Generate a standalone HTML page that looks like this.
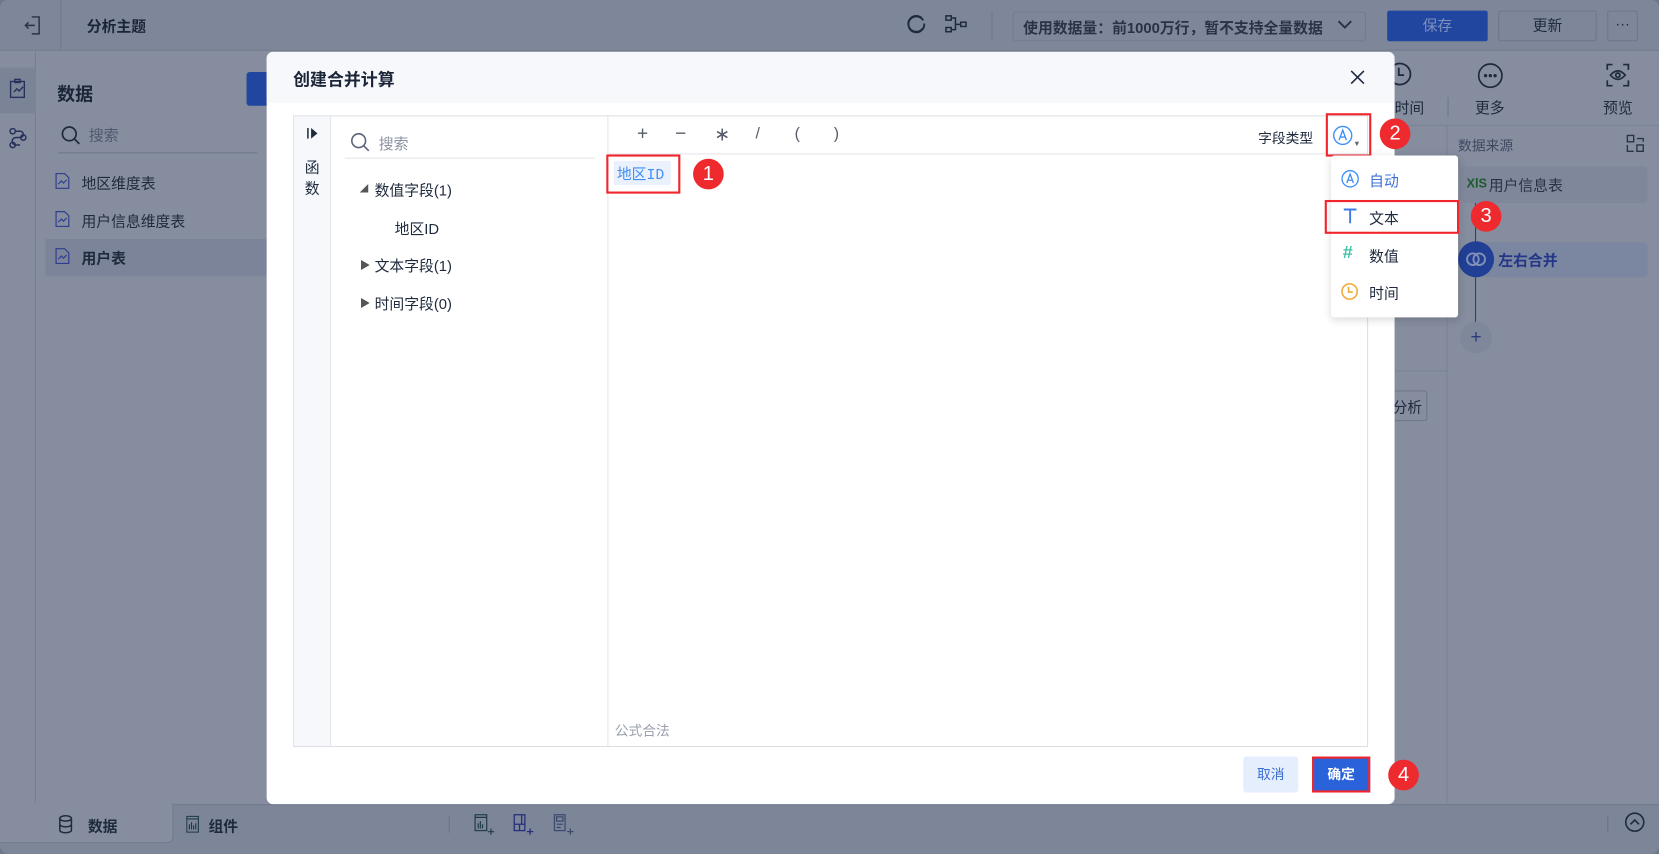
<!DOCTYPE html>
<html><head><meta charset="utf-8"><style>
*{box-sizing:border-box;margin:0;padding:0}
html,body{width:1659px;height:854px;overflow:hidden;background:#6f7789}
body{font-family:"Liberation Sans","Noto Sans CJK SC",sans-serif;font-size:14px;color:#1e2a3d}
#w{position:absolute;left:0;top:0;width:1568px;height:807px;transform:scale(1.0581);transform-origin:0 0;background:#858d9e;border-radius:8px;overflow:hidden}
.a{position:absolute}
.t{position:absolute;white-space:nowrap}
.badge{position:absolute;width:29px;height:29px;border-radius:50%;background:#ee2a2f;color:#fff;font-size:19px;text-align:center;line-height:29px}
.red{position:absolute;border:2px solid #f0262c}
</style></head><body><div id="w">
<!-- top bar -->
<div class="a" style="left:0;top:0;width:1568px;height:48px;background:#7e8799;border-bottom:1px solid #737c8e"></div>
<div class="a" style="left:57px;top:0;width:1px;height:48px;background:#727b8d"></div>
<svg class="a" style="left:22px;top:14px" width="18" height="20" viewBox="0 0 18 20" fill="none" stroke="#2a3347" stroke-width="1.4"><path d="M8 2h7v16H8M2 10h9M5 7l-3 3 3 3"/></svg>
<div class="t" style="left:82px;top:15px;font-weight:bold;font-size:14px;color:#1b2538">分析主题</div>
<svg class="a" style="left:856px;top:13px" width="20" height="20" viewBox="0 0 20 20" fill="none" stroke="#1e2a3d" stroke-width="1.8"><path d="M15 4a7.5 7.5 0 1 0 1 10M5 16"/><circle cx="10" cy="10" r="7.5" stroke-dasharray="20 3"/></svg>
<svg class="a" style="left:893px;top:14px" width="22" height="18" viewBox="0 0 22 18" fill="none" stroke="#1e2a3d" stroke-width="1.4"><rect x="1" y="1" width="5" height="4"/><rect x="1" y="12" width="5" height="4"/><rect x="15" y="7" width="5" height="4"/><path d="M6 3h4v11H6M10 9h5"/></svg>
<div class="a" style="left:937px;top:11px;width:1px;height:26px;background:#6e778a"></div>
<div class="a" style="left:957px;top:11px;width:334px;height:28px;border:1px solid #737c8f;border-radius:3px"></div>
<div class="t" style="left:967px;top:16px;font-size:14px;font-weight:bold;color:#2a3246">使用数据量：前1000万行，暂不支持全量数据</div>
<svg class="a" style="left:1264px;top:18px" width="14" height="10" viewBox="0 0 14 10" fill="none" stroke="#2a3246" stroke-width="1.8"><path d="M1 2l6 6 6-6"/></svg>
<div class="a" style="left:1311px;top:10px;width:95px;height:29px;background:#2146a0;border-radius:2px;color:#7f8fbc;text-align:center;line-height:29px;font-size:14px">保存</div>
<div class="a" style="left:1416px;top:10px;width:93px;height:29px;border:1px solid #6e778a;border-radius:2px;text-align:center;line-height:27px;font-size:14px;color:#1e2a3d">更新</div>
<div class="a" style="left:1519px;top:10px;width:29px;height:29px;border:1px solid #6e778a;border-radius:2px;text-align:center;line-height:22px;font-size:14px;color:#1e2a3d">···</div>
<!-- left rail -->
<div class="a" style="left:0;top:48px;width:34px;height:712px;background:#858d9e;border-right:1px solid #767f91"></div>
<div class="a" style="left:0;top:64px;width:34px;height:43px;background:#7b8497"></div>
<svg class="a" style="left:9px;top:74px" width="16" height="20" viewBox="0 0 16 20" fill="none" stroke="#26305a" stroke-width="1.3"><rect x="1" y="3" width="13" height="15"/><rect x="5" y="1" width="5" height="3"/><path d="M4 13l3-3 2 2 4-4"/></svg>
<svg class="a" style="left:8px;top:120px" width="18" height="22" viewBox="0 0 18 22" fill="none" stroke="#26305a" stroke-width="1.4"><circle cx="4" cy="4" r="2.5"/><circle cx="14" cy="10" r="2.5"/><circle cx="4" cy="17" r="2.5"/><path d="M7 4h4a3 3 0 0 1 0 6H7a3 3 0 0 0 0 7h4"/></svg>
<!-- left panel -->
<div class="t" style="left:54px;top:75px;font-size:17px;font-weight:bold;color:#1b2538">数据</div>
<div class="a" style="left:233px;top:68px;width:22px;height:32px;background:#2146a0;border-radius:3px 0 0 3px"></div>
<svg class="a" style="left:57px;top:118px" width="20" height="20" viewBox="0 0 20 20" fill="none" stroke="#1e2a3d" stroke-width="1.6"><circle cx="8.5" cy="8.5" r="6.5"/><path d="M13.5 13.5l4.5 4.5"/></svg>
<div class="t" style="left:84px;top:118px;color:#4e5870;font-size:14px">搜索</div>
<div class="a" style="left:55px;top:144px;width:188px;height:1px;background:#6e778a"></div>
<div class="a" style="left:43px;top:226px;width:215px;height:35px;background:#7b8498"></div>
<div class="t" style="left:77px;top:163px">地区维度表</div>
<div class="t" style="left:77px;top:199px">用户信息维度表</div>
<div class="t" style="left:77px;top:234px;font-weight:bold">用户表</div>
<svg class="a" style="left:52px;top:163px" width="14" height="16" viewBox="0 0 14 16" fill="none" stroke="#2e3d8f" stroke-width="1.1"><path d="M1 1h8l4 4v10H1z"/><path d="M3 11l3-3 2 2 3-3"/></svg>
<svg class="a" style="left:52px;top:199px" width="14" height="16" viewBox="0 0 14 16" fill="none" stroke="#2e3d8f" stroke-width="1.1"><path d="M1 1h8l4 4v10H1z"/><path d="M3 11l3-3 2 2 3-3"/></svg>
<svg class="a" style="left:52px;top:234px" width="14" height="16" viewBox="0 0 14 16" fill="none" stroke="#2e3d8f" stroke-width="1.1"><path d="M1 1h8l4 4v10H1z"/><path d="M3 11l3-3 2 2 3-3"/></svg>
<!-- right area -->
<svg class="a" style="left:1311px;top:58px" width="24" height="24" viewBox="0 0 24 24" fill="none" stroke="#1e2a3d" stroke-width="1.7"><circle cx="12" cy="12" r="10"/><path d="M11 6v7h5"/></svg>
<div class="t" style="left:1318px;top:92px">时间</div>
<div class="a" style="left:1368px;top:92px;width:1px;height:18px;background:#6e778a"></div>
<svg class="a" style="left:1396px;top:59px" width="25" height="25" viewBox="0 0 25 25" fill="none" stroke="#1e2a3d" stroke-width="1.6"><circle cx="12.5" cy="12.5" r="11"/><circle cx="8" cy="12.5" r=".8" fill="#1e2a3d"/><circle cx="12.5" cy="12.5" r=".8" fill="#1e2a3d"/><circle cx="17" cy="12.5" r=".8" fill="#1e2a3d"/></svg>
<div class="t" style="left:1394px;top:92px">更多</div>
<svg class="a" style="left:1518px;top:60px" width="22" height="22" viewBox="0 0 22 22" fill="none" stroke="#1e2a3d" stroke-width="1.6"><path d="M1 6V1h5M16 1h5v5M21 16v5h-5M6 21H1v-5"/><path d="M4 11q7-8 14 0q-7 8-14 0z"/><circle cx="11" cy="11" r="2"/></svg>
<div class="t" style="left:1515px;top:92px">预览</div>
<div class="a" style="left:1318px;top:118px;width:250px;height:1px;background:#7a8395"></div>
<div class="a" style="left:1367px;top:119px;width:1px;height:641px;background:#7a8395"></div>
<div class="a" style="left:1318px;top:350px;width:50px;height:1px;background:#7a8395"></div>
<div class="t" style="left:1378px;top:127px;color:#3f4960;font-size:13px">数据来源</div>
<svg class="a" style="left:1537px;top:127px" width="17" height="17" viewBox="0 0 17 17" fill="none" stroke="#2a3347" stroke-width="1.3"><rect x="1" y="1" width="6" height="6"/><rect x="10" y="10" width="6" height="6"/><path d="M1 10v6h6M10 4h6v3"/></svg>
<div class="a" style="left:1380px;top:157px;width:177px;height:35px;background:#7f889b;border-radius:4px"></div>
<div class="t" style="left:1386px;top:166px;font-size:12px;font-weight:bold;color:#1d5a2c">XlS</div>
<div class="t" style="left:1407px;top:165px;color:#2a3246">用户信息表</div>
<div class="a" style="left:1394px;top:192px;width:1px;height:140px;background:#2b3e7c"></div>
<div class="a" style="left:1395px;top:229px;width:162px;height:33px;background:#7b86a0;border-radius:4px"></div>
<div class="a" style="left:1378px;top:228px;width:34px;height:34px;border-radius:50%;background:#213f94"></div>
<svg class="a" style="left:1384px;top:236px" width="22" height="18" viewBox="0 0 22 18" fill="none" stroke="#8290b8" stroke-width="1.8"><circle cx="8" cy="9" r="5.5"/><circle cx="14" cy="9" r="5.5"/></svg>
<div class="t" style="left:1416px;top:236px;font-weight:bold;color:#23368a">左右合并</div>
<div class="a" style="left:1380px;top:304px;width:30px;height:30px;border-radius:50%;background:#7f889b;color:#2a3a7a;text-align:center;line-height:28px;font-size:18px">+</div>
<div class="a" style="left:1310px;top:369px;width:39px;height:29px;border:1px solid #6e778a;border-radius:3px"></div>
<div class="t" style="left:1316px;top:375px">分析</div>
<!-- bottom -->
<div class="a" style="left:0;top:760px;width:1568px;height:47px;background:#7d8699;border-top:1px solid #717a8c"></div>
<div class="a" style="left:0;top:759px;width:164px;height:38px;background:#858d9e;border-radius:0 0 6px 0;border-right:1px solid #717a8c;border-bottom:1px solid #717a8c"></div>
<svg class="a" style="left:55px;top:770px" width="14" height="18" viewBox="0 0 14 18" fill="none" stroke="#1e2a3d" stroke-width="1.4"><ellipse cx="7" cy="3.5" rx="5.5" ry="2.5"/><path d="M1.5 3.5v11c0 3.3 11 3.3 11 0v-11M1.5 9c0 3.3 11 3.3 11 0"/></svg>
<div class="t" style="left:83px;top:771px;font-weight:bold">数据</div>
<svg class="a" style="left:176px;top:771px" width="12" height="16" viewBox="0 0 12 16" fill="none" stroke="#1e3a4a" stroke-width="1.1"><rect x=".5" y=".5" width="11" height="15"/><path d="M.5 3h11M3 13V8M5 13V6M7 13V9M9 13V7"/></svg>
<div class="t" style="left:197px;top:771px;font-weight:bold">组件</div>
<div class="a" style="left:424px;top:771px;width:1px;height:16px;background:#6a7386"></div>
<svg class="a" style="left:448px;top:769px" width="20" height="20" viewBox="0 0 20 20" fill="none" stroke="#1e3a4a" stroke-width="1.1"><rect x="1" y="1" width="11" height="15"/><path d="M1 3.5h11M4 14V9M6 14V7M8 14V10M13 17h6M16 14v6"/></svg>
<svg class="a" style="left:485px;top:769px" width="20" height="20" viewBox="0 0 20 20" fill="none" stroke="#262e7a" stroke-width="1.2"><rect x="1" y="1" width="10" height="15"/><path d="M1 10h10M6 10v6M8 1v9M13 17h6M16 14v6"/></svg>
<svg class="a" style="left:523px;top:769px" width="20" height="20" viewBox="0 0 20 20" fill="none" stroke="#3c4a6e" stroke-width="1.2"><rect x="1" y="1" width="10" height="15"/><rect x="3" y="3" width="6" height="4"/><path d="M3 10h6M3 13h4M13 17h6M16 14v6"/></svg>
<div class="a" style="left:1519px;top:771px;width:1px;height:16px;background:#6a7386"></div>
<svg class="a" style="left:1535px;top:767px" width="20" height="20" viewBox="0 0 20 20" fill="none" stroke="#1e2a3d" stroke-width="1.5"><circle cx="10" cy="10" r="8.5"/><path d="M6 12l4-4 4 4"/></svg>
<!-- dialog -->
<div class="a" style="left:252px;top:49px;width:1066px;height:711px;background:#fff;border-radius:6px;overflow:hidden">
 <div class="a" style="left:0;top:0;width:1066px;height:48px;background:#f6f8fc"></div>
</div>
<div class="t" style="left:277px;top:62px;font-size:16px;font-weight:bold;color:#1b2538">创建合并计算</div>
<svg class="a" style="left:1276px;top:66px" width="14" height="14" viewBox="0 0 14 14" stroke="#1e2a3d" stroke-width="1.5"><path d="M1 1l12 12M13 1L1 13"/></svg>
<div class="a" style="left:277px;top:109px;width:1016px;height:597px;border:1px solid #dcdfe6"></div>
<div class="a" style="left:278px;top:110px;width:35px;height:595px;background:#f6f8fc;border-right:1px solid #e4e6ec"></div>
<div class="a" style="left:574px;top:110px;width:1px;height:595px;background:#e4e6ec"></div>
<div class="a" style="left:575px;top:145px;width:717px;height:1px;background:#e4e6ec"></div>
<svg class="a" style="left:290px;top:120px" width="12" height="12" viewBox="0 0 12 12"><path d="M1 1v10" stroke="#1e2a3d" stroke-width="1.4"/><path d="M4 1l6 5-6 5z" fill="#1e2a3d"/></svg>
<div class="t" style="left:288px;top:148px;line-height:20px;font-size:14px">函<br>数</div>
<svg class="a" style="left:331px;top:125px" width="19" height="19" viewBox="0 0 19 19" fill="none" stroke="#5b6478" stroke-width="1.5"><circle cx="8" cy="8" r="6.5"/><path d="M13 13l4.5 4.5"/></svg>
<div class="t" style="left:358px;top:126px;color:#8a91a0">搜索</div>
<div class="a" style="left:326px;top:149px;width:236px;height:1px;background:#e4e6ec"></div>
<div class="t" style="left:340px;top:173px;font-size:8px;color:#555">◢</div>
<div class="t" style="left:354px;top:170px">数值字段(1)</div>
<div class="t" style="left:373px;top:206px">地区ID</div>
<div class="t" style="left:340px;top:242px;font-size:10px;color:#555">▶</div>
<div class="t" style="left:354px;top:241px">文本字段(1)</div>
<div class="t" style="left:340px;top:278px;font-size:10px;color:#555">▶</div>
<div class="t" style="left:354px;top:277px">时间字段(0)</div>
<div class="t" style="left:602px;top:116px;font-size:18px;color:#555b68;word-spacing:0">+</div>
<div class="t" style="left:638px;top:116px;font-size:18px;color:#555b68">−</div>
<div class="t" style="left:675px;top:117px;font-size:18px;color:#555b68">∗</div>
<div class="t" style="left:714px;top:118px;font-size:15px;color:#555b68">/</div>
<div class="t" style="left:751px;top:118px;font-size:15px;color:#555b68">(</div>
<div class="t" style="left:788px;top:118px;font-size:15px;color:#555b68">)</div>
<div class="t" style="left:1189px;top:120px;font-size:13px">字段类型</div>
<svg class="a" style="left:1259px;top:118px" width="20" height="20" viewBox="0 0 20 20" fill="none" stroke="#3e8ef7" stroke-width="1.3"><circle cx="10" cy="10" r="8.5"/><path d="M6.5 14.5L10 5l3.5 9.5M7.7 11.5h4.6"/></svg>
<div class="t" style="left:1279px;top:133px;font-size:7px;color:#666">▼</div>
<div class="red" style="left:1253px;top:107px;width:43px;height:41px"></div>
<div class="badge" style="left:1304px;top:112px">2</div>
<div class="a" style="left:580px;top:152px;width:54px;height:23px;background:#eaf1fd;border-radius:2px"></div>
<div class="t" style="left:583px;top:154px;color:#3e8ef7;font-family:'Liberation Mono','Noto Sans CJK SC',monospace;font-size:14px">地区ID</div>
<div class="red" style="left:573px;top:146px;width:70px;height:37px"></div>
<div class="badge" style="left:655px;top:150px">1</div>
<div class="t" style="left:581px;top:680px;color:#9aa0ab;font-size:13px">公式合法</div>
<!-- dropdown -->
<div class="a" style="left:1258px;top:147px;width:120px;height:153px;background:#fff;border-radius:3px;box-shadow:0 2px 8px rgba(0,0,0,.15)"></div>
<svg class="a" style="left:1267px;top:160px" width="18" height="18" viewBox="0 0 20 20" fill="none" stroke="#3e8ef7" stroke-width="1.4"><circle cx="10" cy="10" r="8.5"/><path d="M6.5 14.5L10 5l3.5 9.5M7.7 11.5h4.6"/></svg>
<div class="t" style="left:1294px;top:161px;color:#3e6fd8">自动</div>
<svg class="a" style="left:1269px;top:196px" width="14" height="16" viewBox="0 0 14 16" fill="none" stroke="#3e7be0" stroke-width="1.8"><path d="M1 2h12M7 2v13"/></svg>
<div class="t" style="left:1294px;top:196px">文本</div>
<div class="red" style="left:1252px;top:189px;width:127px;height:32px"></div>
<div class="badge" style="left:1390px;top:190px">3</div>
<div class="t" style="left:1269px;top:229px;font-size:17px;font-weight:bold;color:#3fbfa8">#</div>
<div class="t" style="left:1294px;top:232px">数值</div>
<svg class="a" style="left:1267px;top:267px" width="17" height="17" viewBox="0 0 17 17" fill="none" stroke="#f0a93a" stroke-width="1.5"><circle cx="8.5" cy="8.5" r="7.2"/><path d="M7.5 4v5h4"/></svg>
<div class="t" style="left:1294px;top:267px">时间</div>
<!-- footer -->
<div class="a" style="left:1175px;top:715px;width:52px;height:34px;background:#e5eefc;border-radius:3px;color:#3a6fd6;text-align:center;line-height:34px;font-size:13px">取消</div>
<div class="a" style="left:1240px;top:715px;width:55px;height:34px;background:#2962d9;border:2px solid #f0262c;color:#fff;text-align:center;line-height:30px;font-size:13px;font-weight:bold">确定</div>
<div class="badge" style="left:1312px;top:718px">4</div>
</div></body></html>
